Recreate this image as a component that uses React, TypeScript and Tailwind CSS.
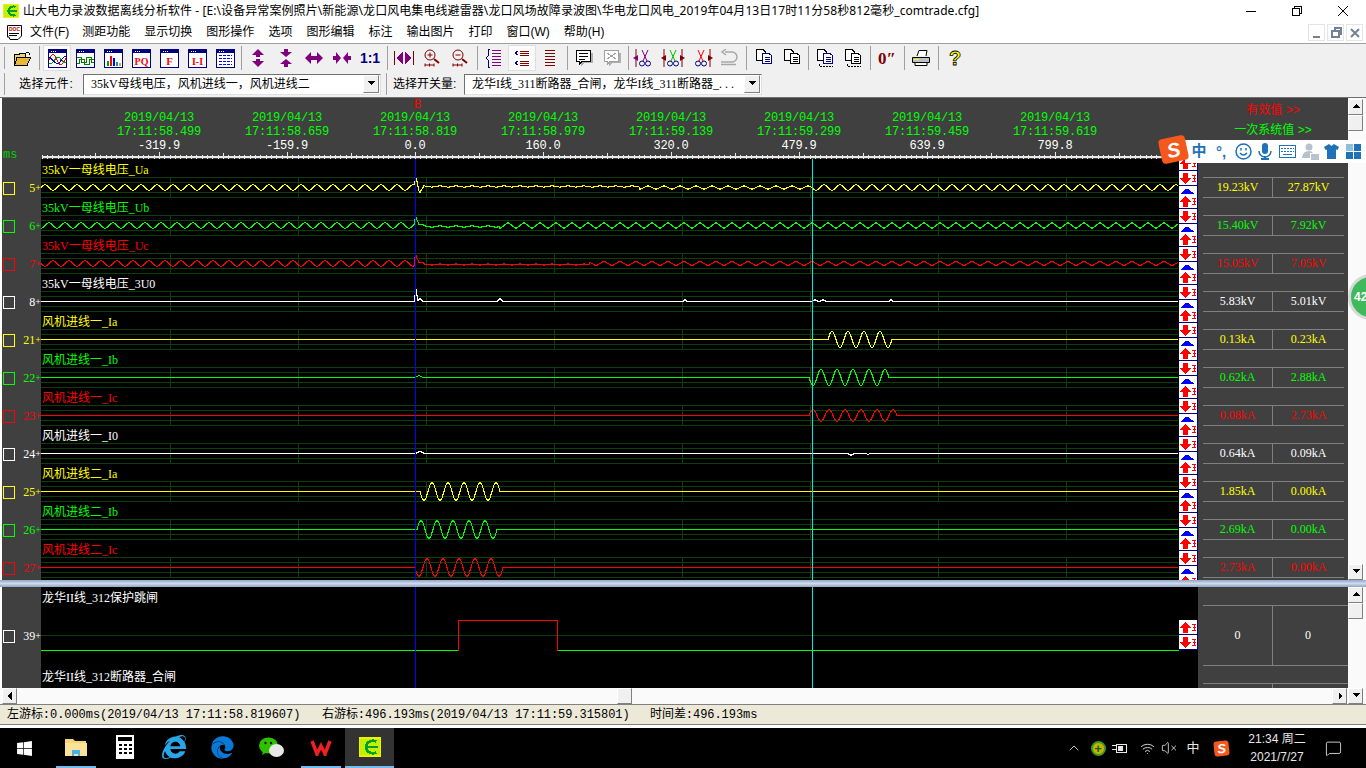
import type { ReactNode } from "react";
import { ChevronUp, Wifi, VolumeX, MessageSquare } from "lucide-react";
import { FaWindows, FaInternetExplorer, FaEdge } from "react-icons/fa";

const UI_FONT = "font-['Liberation_Sans','Noto_Sans_CJK_SC',sans-serif]";
const TITLE_FONT = "font-['Noto_Sans','Noto_Sans_CJK_SC',sans-serif]";
const SERIF_FONT = "font-['Liberation_Serif','Noto_Sans_CJK_SC',serif]";
const MONO_FONT = "font-['Liberation_Mono','Noto_Sans_CJK_SC',monospace]";

const PURPLE = "#800080";
const NAVY = "#000080";
const MAROON = "#800000";
const GRID = "#0c3f0c";

const tones = {
  yellow: { hex: "#ffff00", text: "text-[#ffff00]", border: "border-[#ffff00]" },
  green: { hex: "#00ff00", text: "text-[#00ff00]", border: "border-[#00ff00]" },
  red: { hex: "#ff0000", text: "text-[#ff0000]", border: "border-[#ff0000]" },
  white: { hex: "#ffffff", text: "text-[#ffffff]", border: "border-[#ffffff]" },
};
type Tone = keyof typeof tones;

const sine = (x: number, x0: number) => Math.sin(((x - x0) / 16) * 2 * Math.PI);
const tri = (x: number, x0: number) => (2 / Math.PI) * Math.asin(sine(x, x0));

// burst of sine between two x positions, flat everywhere else
const burst = (x: number, from: number, to: number, amp: number, dir = 1) =>
  x >= from && x <= to ? dir * amp * sine(x, from) : 0;

const blip = (x: number, at: number, h: number, w = 2) =>
  Math.abs(x - at) <= w ? h * (1 - Math.abs(x - at) / (w + 1)) : 0;

type Channel = {
  id: number;
  name: string;
  tone: Tone;
  left: string;
  right: string;
  signal: (x: number) => number;
};

const channels: Channel[] = [
  {
    id: 5,
    name: "35kV一母线电压_Ua",
    tone: "yellow",
    left: "19.23kV",
    right: "27.87kV",
    signal: (x) => {
      if (x < 415) return 3.5 * tri(x, 41);
      if (x < 424) return blip(x, 416, 9) + blip(x, 420, -5);
      if (x < 640) return 1 + 0.7 * tri(x, 420);
      if (x < 812) return 1.8 * tri(x, 420);
      return 3.5 * tri(x, 420);
    },
  },
  {
    id: 6,
    name: "35kV一母线电压_Ub",
    tone: "green",
    left: "15.40kV",
    right: "7.92kV",
    signal: (x) => {
      if (x < 415) return 3.5 * tri(x, 45);
      if (x < 424) return blip(x, 416, 7) + 1;
      if (x < 500) return -1 + 0.8 * tri(x, 420);
      return 3 * tri(x, 424);
    },
  },
  {
    id: 7,
    name: "35kV一母线电压_Uc",
    tone: "red",
    left: "15.05kV",
    right: "7.05kV",
    signal: (x) => {
      if (x < 415) return 3.5 * tri(x, 49);
      if (x < 424) return blip(x, 416, 7) + 1;
      if (x < 590) return -1 + 0.6 * tri(x, 420);
      return 2.5 * tri(x, 424);
    },
  },
  {
    id: 8,
    name: "35kV一母线电压_3U0",
    tone: "white",
    left: "5.83kV",
    right: "5.01kV",
    signal: (x) =>
      blip(x, 416, 12, 1) +
      blip(x, 420, 3) +
      blip(x, 500, 3) +
      blip(x, 685, 2, 1) +
      blip(x, 815, 2) +
      blip(x, 823, 2) +
      blip(x, 891, 2, 1),
  },
  {
    id: 21,
    name: "风机进线一_Ia",
    tone: "yellow",
    left: "0.13kA",
    right: "0.23kA",
    signal: (x) => burst(x, 828, 892, 8),
  },
  {
    id: 22,
    name: "风机进线一_Ib",
    tone: "green",
    left: "0.62kA",
    right: "2.88kA",
    signal: (x) => blip(x, 419, 2, 3) + burst(x, 809, 889, 8, -1),
  },
  {
    id: 23,
    name: "风机进线一_Ic",
    tone: "red",
    left: "0.08kA",
    right: "2.73kA",
    signal: (x) => burst(x, 809, 897, 6),
  },
  {
    id: 24,
    name: "风机进线一_I0",
    tone: "white",
    left: "0.64kA",
    right: "0.09kA",
    signal: (x) => blip(x, 420, 2, 4) + blip(x, 851, -2) + blip(x, 868, -1, 1),
  },
  {
    id: 25,
    name: "风机进线二_Ia",
    tone: "yellow",
    left: "1.85kA",
    right: "0.00kA",
    signal: (x) => burst(x, 420, 500, 9, -1),
  },
  {
    id: 26,
    name: "风机进线二_Ib",
    tone: "green",
    left: "2.69kA",
    right: "0.00kA",
    signal: (x) => burst(x, 417, 497, 9),
  },
  {
    id: 27,
    name: "风机进线二_Ic",
    tone: "red",
    left: "2.73kA",
    right: "0.00kA",
    signal: (x) => burst(x, 415, 503, 9, -1),
  },
];

const ticks = [
  ["17:11:58.499", "-319.9"],
  ["17:11:58.659", "-159.9"],
  ["17:11:58.819", "0.0"],
  ["17:11:58.979", "160.0"],
  ["17:11:59.139", "320.0"],
  ["17:11:59.299", "479.9"],
  ["17:11:59.459", "639.9"],
  ["17:11:59.619", "799.8"],
];

function TitleLogo({ size = 16 }: { size?: number }) {
  return (
    <svg width={size} height={size} viewBox="0 0 16 16" shapeRendering="crispEdges">
      <rect x="0.5" y="1.5" width="15" height="13" fill="#c4f000" stroke="#f0f000" />
      <path d="M12.5 4 A5 4.5 0 1 0 12.5 12" fill="none" stroke="#00a030" strokeWidth="2" />
      <rect x="5" y="7" width="9" height="2" fill="#00a030" />
    </svg>
  );
}

function DocIcon() {
  return (
    <svg width="17" height="17" viewBox="0 0 17 17">
      <path d="M1.5 1.5 H15.5 V12 L12 15.5 H4 L3 13 H1.5 Z" fill="#fff" stroke="#000" />
      <text x="3" y="7" fontSize="5" fontWeight="700" fill="#c00000" className={UI_FONT}>
        DOC
      </text>
      <path d="M3 9.5 H13 M3 11.5 H11" stroke="#000" />
    </svg>
  );
}

function WinFrame({ children }: { children?: ReactNode }) {
  return (
    <svg width="19" height="19" viewBox="0 0 19 19" shapeRendering="crispEdges">
      <rect x="0.5" y="0.5" width="18" height="18" fill="#fff" stroke={NAVY} />
      <rect x="1" y="1" width="17" height="3" fill={NAVY} />
      <path d="M3 2 h1 M5 2 h1 M7 2 h1" stroke="#fff" />
      {children}
    </svg>
  );
}

function WinText({ label, size = 11 }: { label: string; size?: number }) {
  return (
    <WinFrame>
      <text
        x="9.5"
        y="15.5"
        textAnchor="middle"
        fontSize={size}
        fontWeight="700"
        fill="#ff0000"
        className={SERIF_FONT}
      >
        {label}
      </text>
    </WinFrame>
  );
}

function ArrowPair({ dir }: { dir: "v-out" | "v-in" | "h-out" | "h-in" }) {
  const paths = {
    "v-out": "M7 0 L13 6 H9 V8 H5 V6 H1 Z M7 18 L13 12 H9 V10 H5 V12 H1 Z",
    "v-in": "M7 8 L13 3 H9 V0 H5 V3 H1 Z M7 10 L13 15 H9 V18 H5 V15 H1 Z",
    "h-out": "M0 7 L6 1 V5 H12 V1 L18 7 L12 13 V9 H6 V13 Z",
    "h-in": "M8 7 L3 1 V5 H0 V9 H3 V13 Z M10 7 L15 1 V5 H18 V9 H15 V13 Z",
  };
  const tall = dir[0] === "v";
  return (
    <svg width={tall ? 14 : 18} height={tall ? 18 : 14} viewBox={tall ? "0 0 14 18" : "0 0 18 14"}>
      <path d={paths[dir]} fill={PURPLE} />
    </svg>
  );
}

function Magnifier({ plus }: { plus?: boolean }) {
  return (
    <svg width="18" height="20" viewBox="0 0 18 20" fill="none" stroke={MAROON}>
      <circle cx="7" cy="7" r="5" />
      <path d="M4.5 7 H9.5" />
      {plus && <path d="M7 4.5 V9.5" />}
      <path d="M11 11 L16 15" strokeWidth="2" />
      <path d="M2 17 H11 M2 15.5 V18.5 M6.5 15.5 V18.5 M11 15.5 V18.5" />
    </svg>
  );
}

function ListIcon({ kind }: { kind: "left" | "both" | "lines" }) {
  const lines = [2, 5, 8, 11, 14, 17];
  return (
    <svg width="18" height="20" viewBox="0 0 18 20" shapeRendering="crispEdges" fill="none">
      {kind === "left" && (
        <>
          <path d="M5 1 H3 V8 L1 10 L3 12 V19 H5" stroke={NAVY} />
          {lines.map((y) => (
            <path key={y} d={`M7 ${y + 0.5} H16`} stroke={PURPLE} />
          ))}
        </>
      )}
      {kind === "both" && (
        <>
          <path d="M5 3 L2 5 L5 7 M5 13 L2 15 L5 17" stroke={NAVY} />
          {[3, 5, 7, 13, 15, 17].map((y) => (
            <path key={y} d={`M7 ${y + 0.5} H16`} stroke={MAROON} />
          ))}
        </>
      )}
      {kind === "lines" &&
        lines.map((y) => <path key={y} d={`M4 ${y + 0.5} H14`} stroke={MAROON} />)}
    </svg>
  );
}

function NoteIcon({ muted }: { muted?: boolean }) {
  const c = muted ? "#a0a0a0" : "#000";
  return (
    <svg width="20" height="20" viewBox="0 0 20 20" fill="none" shapeRendering="crispEdges">
      <path d="M5 5 H19 V15 H10 L7 18 V15 H5 Z" fill="#b0b0b0" stroke="none" />
      <path d="M2.5 2.5 H16.5 V13.5 H8 L5 16.5 V13.5 H2.5 Z" fill="#fff" stroke={c} />
      {muted ? (
        <path d="M5 5 L14 11 M14 5 L5 11" stroke={c} />
      ) : (
        <path d="M5 5.5 H14 M5 8.5 H14 M5 11.5 H11" stroke={c} />
      )}
    </svg>
  );
}

function Scissors({ kind }: { kind: "left" | "mid" | "right" }) {
  const blade = kind === "mid" ? "#00c000" : kind === "left" ? PURPLE : "#ff0000";
  return (
    <svg width="24" height="20" viewBox="0 0 24 20" fill="none">
      <path d="M9 2 L14 13 M15 2 L10 13" stroke={blade} />
      <circle cx="9" cy="15.5" r="2.5" stroke={NAVY} />
      <circle cx="15" cy="15.5" r="2.5" stroke={NAVY} />
      {kind !== "right" && <path d="M3 1 V19" stroke={MAROON} />}
      {kind !== "left" && <path d="M21 1 V19" stroke={MAROON} />}
      {kind !== "right" && <path d="M0 10 L5 7 V13 Z" fill={kind === "left" ? PURPLE : MAROON} />}
      {kind !== "left" && <path d="M24 10 L19 7 V13 Z" fill={MAROON} />}
    </svg>
  );
}

function UndoIcon() {
  return (
    <svg width="20" height="18" viewBox="0 0 20 18" fill="none" stroke="#a8a8a8" strokeWidth="1.5">
      <path d="M6 3 H13 A5 5 0 0 1 13 13 H2" />
      <path d="M7 0 L3 3 L7 6" />
      <path d="M2 15.5 H17" />
    </svg>
  );
}

function CopyIcon({ tone = "#000080", dashed }: { tone?: string; dashed?: boolean }) {
  return (
    <svg width="18" height="20" viewBox="0 0 18 20" fill="none" shapeRendering="crispEdges">
      <path d="M1.5 1.5 H8 L10 3.5 V12.5 H1.5 Z" fill="#fff" stroke="#000" />
      <path d="M7.5 5.5 H14 L16.5 7.5 V15.5 H7.5 Z" fill="#fff" stroke={tone} />
      <path d="M9.5 9.5 H14.5 M9.5 11.5 H14.5 M9.5 13.5 H14.5" stroke={tone} />
      {dashed && <path d="M3.5 18.5 H16.5 M3.5 15.5 V18.5" stroke="#000" strokeDasharray="2 1" />}
    </svg>
  );
}

function PrinterIcon() {
  return (
    <svg width="20" height="18" viewBox="0 0 20 18" fill="none" stroke="#000">
      <path d="M6 7 L8 1.5 H16 L15 7" fill="#fff" />
      <path d="M1.5 8.5 H18.5 V13.5 H1.5 Z" fill="#c0c0c0" />
      <path d="M4 13.5 H16 V16.5 H4 Z" fill="#fff" />
      <path d="M3 10.5 H8" stroke="#ffff00" />
    </svg>
  );
}

function ToolBtn({ children, pressed }: { children: ReactNode; pressed?: boolean }) {
  return (
    <div
      className={`w-[28px] h-[26px] shrink-0 flex items-center justify-center ${
        pressed ? "bg-[#fbfbfb] border border-[#dedede]" : ""
      }`}
    >
      {children}
    </div>
  );
}

function Sep({ w = "w-[6px]" }: { w?: string }) {
  return (
    <div className={`${w} h-[24px] shrink-0 flex justify-center`}>
      <div className="w-px h-full bg-[#a0a0a0]" />
    </div>
  );
}

function Combo({ text, width }: { text: string; width: string }) {
  return (
    <div
      className={`${width} h-[21px] shrink-0 flex items-center bg-white border border-t-[#707070] border-l-[#707070] border-r-[#e0e0e0] border-b-[#e0e0e0]`}
    >
      <span className={`flex-1 pl-[7px] text-[12px] whitespace-nowrap overflow-hidden text-black ${SERIF_FONT}`}>
        {text}
      </span>
      <div className="w-[16px] h-[18px] mr-px bg-[#f0f0f0] border border-t-white border-l-white border-r-[#808080] border-b-[#808080] flex items-center justify-center">
        <Tri dir="down" />
      </div>
    </div>
  );
}

function Tri({ dir }: { dir: "up" | "down" | "left" | "right" }) {
  const d = {
    up: "M4 1 L8 5 H0 Z",
    down: "M4 5 L8 1 H0 Z",
    left: "M1.5 4 L5.5 0 V8 Z",
    right: "M6.5 4 L2.5 0 V8 Z",
  };
  return (
    <svg width="8" height="8" viewBox="0 0 8 8" shapeRendering="crispEdges">
      <path d={d[dir]} fill="#000" />
    </svg>
  );
}

function ScrollBtn({ dir }: { dir?: "up" | "down" | "left" | "right" }) {
  return (
    <div className="w-[15px] h-[16px] shrink-0 bg-[#f0f0f0] border border-t-white border-l-white border-r-[#808080] border-b-[#808080] flex items-center justify-center">
      {dir && <Tri dir={dir} />}
    </div>
  );
}

function ArrowPairCell({ kind }: { kind: "up" | "down" }) {
  const arrow =
    kind === "up"
      ? "M5.5 2 L11 8 H8 V13 H3 V8 H0 Z"
      : "M5.5 13 L11 7 H8 V2 H3 V7 H0 Z";
  return (
    <svg width="18" height="15" viewBox="0 0 18 15" shapeRendering="crispEdges" className="block">
      <rect width="18" height="15" fill="#fff" />
      <path d={arrow} fill="#ff0000" transform="translate(1 0)" />
      <path d="M13 4.5 H17 M13 10.5 H17 M15 4.5 V10.5 M13.5 7.5 H16.5" stroke="#ff0000" />
      <path d="M0 14.5 H18" stroke={NAVY} />
    </svg>
  );
}

function ArrowStack({ withPeak = true }: { withPeak?: boolean }) {
  return (
    <div className="w-[19px] shrink-0 border-r border-[#000080] bg-white">
      <div className="h-px bg-[#000080] -mb-px" />
      <ArrowPairCell kind="up" />
      <ArrowPairCell kind="down" />
      {withPeak && (
        <svg width="18" height="8" viewBox="0 0 18 8" shapeRendering="crispEdges" className="block">
          <path d="M1 8 L7 3 H9 L12 6 H14 L15 8 Z" fill="#0000ff" />
        </svg>
      )}
    </div>
  );
}

function Ruler() {
  const marks = Array.from({ length: 214 }, (_, i) => i);
  return (
    <svg width="1138" height="7" viewBox="0 0 1138 7" shapeRendering="crispEdges" className="block">
      <rect x="1" y="4" width="1137" height="2" fill="#e8e8e8" />
      {marks.map((i) => {
        const x = Math.round(118 + (i - 22) * (128 / 24));
        const major = (i - 22) % 24 === 0;
        const mid = (i - 22) % 12 === 0;
        const top = major ? 0 : mid ? 1 : 3;
        return <rect key={i} x={x} y={top} width="1" height={7 - top} fill="#e8e8e8" />;
      })}
    </svg>
  );
}

function ChannelPlot({ ch }: { ch: Channel }) {
  const pts: string[] = [];
  for (let x = 41; x <= 1178; x += 1) {
    const y = 10.5 - ch.signal(x);
    pts.push(`${x - 41},${y.toFixed(1)}`);
  }
  const verticals = [170, 298, 426, 554, 682, 810, 938, 1066];
  return (
    <div className="h-[38px] w-[1138px]">
      <div className={`h-[14px] leading-[14px] pl-px text-[12px] whitespace-nowrap ${tones[ch.tone].text} ${SERIF_FONT}`}>
        {ch.name}
      </div>
      <svg width="1138" height="24" viewBox="0 0 1138 24" className="block overflow-visible" fill="none">
        <g stroke={GRID} shapeRendering="crispEdges">
          <path d="M0 0.5 H1137 M0 5.5 H1137 M0 15.5 H1137 M0 20.5 H1137" />
          {verticals.map((x) => (
            <path key={x} d={`M${x - 41 + 0.5} 0 V21`} />
          ))}
        </g>
        <polyline points={pts.join(" ")} stroke={tones[ch.tone].hex} strokeWidth="1.15" shapeRendering="crispEdges" />
      </svg>
    </div>
  );
}

function Gutter({ id, tone }: { id: number; tone: Tone }) {
  return (
    <div className={`h-[38px] flex items-start pt-[19px] pl-px ${SERIF_FONT}`}>
      <div className={`w-[13px] h-[13px] border ${tones[tone].border}`} />
      <span className={`w-[21px] text-right text-[12px] leading-[11px] mt-px ${tones[tone].text}`}>{id}</span>
      <span className={`text-[10px] leading-[10px] mt-[1px] ${tones[tone].text}`}>+</span>
    </div>
  );
}

function ValueCell({ ch }: { ch: Channel }) {
  return (
    <div className={`h-[38px] pt-[14px] ${SERIF_FONT}`}>
      <div className={`h-[21px] w-[141px] flex border-y border-[#808080] text-[12px] ${tones[ch.tone].text}`}>
        <span className="w-[70px] border-r border-[#808080] text-center leading-[19px]">{ch.left}</span>
        <span className="flex-1 text-center leading-[19px]">{ch.right}</span>
      </div>
    </div>
  );
}

function SogouBar() {
  return (
    <div className="absolute left-[1160px] top-[137px] flex items-start">
      <div className="w-[27px] h-[25px] rounded-[4px] bg-[#f4581c] -rotate-12 flex items-center justify-center text-white text-[20px] font-bold italic leading-none shrink-0 z-10 font-['Liberation_Sans',sans-serif]">
        S
      </div>
      <div className="mt-[3px] -ml-[2px] w-[181px] h-[23px] bg-white flex items-center pl-[3px] text-[#1f72b8] text-[15px]">
        <span className="w-[22px] text-center font-bold">中</span>
        <span className="w-[22px] text-center font-bold leading-none">°,</span>
        <div className="w-[22px] flex justify-center">
          <svg width="17" height="17" viewBox="0 0 17 17" fill="none" stroke="#1f72b8" strokeWidth="1.5">
            <circle cx="8.5" cy="8.5" r="7.5" />
            <path d="M5 10 Q8.5 14 12 10" />
            <path d="M6 5 V7.5 M11 5 V7.5" />
          </svg>
        </div>
        <div className="w-[22px] flex justify-center">
          <svg width="14" height="17" viewBox="0 0 14 17" fill="#1f72b8">
            <rect x="4" y="0" width="6" height="11" rx="3" />
            <path d="M1 8 A6 6 0 0 0 13 8" fill="none" stroke="#1f72b8" strokeWidth="1.5" />
            <rect x="6" y="13" width="2" height="3" />
            <rect x="3" y="15" width="8" height="2" />
          </svg>
        </div>
        <div className="w-[23px] flex justify-center">
          <svg width="17" height="13" viewBox="0 0 17 13" shapeRendering="crispEdges">
            <rect x="0.5" y="0.5" width="16" height="12" rx="1" fill="#fff" stroke="#1f72b8" />
            <path d="M2 3.5 H15 M2 6.5 H15" stroke="#1f72b8" strokeDasharray="2 1" />
            <path d="M4 9.5 H13" stroke="#1f72b8" />
          </svg>
        </div>
        <div className="w-[22px] flex justify-center">
          <svg width="17" height="17" viewBox="0 0 17 17" fill="#b8c2cc">
            <circle cx="7" cy="4" r="3.5" />
            <path d="M0 14 Q1 8 7 8 Q10 8 11 10 H8 V15 H0 Z" />
            <rect x="9" y="11" width="8" height="6" />
          </svg>
        </div>
        <div className="w-[21px] flex justify-center">
          <svg width="15" height="15" viewBox="0 0 15 15" fill="#1f72b8">
            <path d="M5 0 L7.5 2 L10 0 L15 3 L13.5 6 L12 5.5 V15 H3 V5.5 L1.5 6 L0 3 Z" />
          </svg>
        </div>
        <div className="w-[22px] flex justify-center">
          <svg width="15" height="15" viewBox="0 0 15 15" fill="#1f72b8" shapeRendering="crispEdges">
            <rect x="0" y="0" width="7" height="7" fill="#8fbfe0" />
            <rect x="8" y="0" width="7" height="7" />
            <rect x="0" y="8" width="7" height="7" />
            <rect x="8" y="8" width="7" height="7" />
          </svg>
        </div>
      </div>
    </div>
  );
}

function TaskItem({ children, open, active }: { children: ReactNode; open?: boolean; active?: boolean }) {
  return (
    <div className={`w-[49px] h-full shrink-0 flex justify-center ${active ? "bg-[#333333]" : ""}`}>
      <div
        className={`h-full flex items-center justify-center ${active ? "w-[49px]" : "w-[40px]"} border-b-2 ${
          open ? "border-[#76b9ed]" : "border-transparent"
        }`}
      >
        {children}
      </div>
    </div>
  );
}

export default function App() {
  return (
    <div className={`relative w-[1366px] h-[768px] overflow-hidden bg-white flex flex-col ${UI_FONT}`}>
      {/* title bar */}
      <div className="h-[22px] shrink-0 flex items-center pl-[3px] text-[12px] text-black">
        <TitleLogo />
        <span className={`ml-[4px] whitespace-nowrap tracking-[0.08px] ${TITLE_FONT}`}>
          山大电力录波数据离线分析软件 - [E:\设备异常案例照片\新能源\龙口风电集电线避雷器\龙口风场故障录波图\华电龙口风电_2019年04月13日17时11分58秒812毫秒_comtrade.cfg]
        </span>
        <div className="ml-auto flex items-center">
          <div className="w-[46px] flex justify-center">
            <div className="w-[10px] h-px bg-black" />
          </div>
          <div className="w-[46px] flex justify-center">
            <svg width="10" height="10" viewBox="0 0 10 10" fill="none" stroke="#000" shapeRendering="crispEdges">
              <path d="M2.5 2.5 V0.5 H9.5 V7.5 H7.5" />
              <rect x="0.5" y="2.5" width="7" height="7" />
            </svg>
          </div>
          <div className="w-[46px] flex justify-center">
            <svg width="10" height="10" viewBox="0 0 10 10" stroke="#000">
              <path d="M0 0 L10 10 M10 0 L0 10" />
            </svg>
          </div>
        </div>
      </div>

      {/* menu */}
      <div className="h-[22px] shrink-0 flex items-center border-b border-[#a0a0a0] pl-[6px] pb-px text-[12px] text-black">
        <DocIcon />
        <div className="ml-[7px] flex gap-[14px] whitespace-nowrap">
          <span className="-mr-px">文件(F)</span>
          {["测距功能", "显示切换", "图形操作", "选项", "图形编辑", "标注", "输出图片", "打印", "窗口(W)", "帮助(H)"].map((m) => (
            <span key={m}>{m}</span>
          ))}
        </div>
        <div className="ml-auto flex gap-[2px] mr-[3px]">
          {["M4 12 H11", "M4 6 H11 V12 H4 Z M7 6 V3 H13 V9 H11", "M4 4 L12 12 M12 4 L4 12"].map((d) => (
            <div key={d} className="w-[17px] h-[17px] border border-[#e4e4e4] flex items-center justify-center">
              <svg width="15" height="15" viewBox="0 0 15 15" fill="none" stroke="#728195" strokeWidth="2">
                <path d={d} />
              </svg>
            </div>
          ))}
        </div>
      </div>

      {/* toolbar */}
      <div className="h-[28px] shrink-0 bg-[#f0f0f0] flex items-center pl-[4px]">
        <div className="w-[4px] h-[22px] border-l border-[#a0a0a0]" />
        <ToolBtn>
          <svg width="17" height="15" viewBox="0 0 17 15" shapeRendering="crispEdges">
            <path d="M0.5 3.5 H5 L6 2 H11 V6 H16.5 L13 14.5 H0.5 Z" fill="#f0d070" stroke="#000" />
            <path d="M3 6.5 H16.5 L13 14.5 H0.5 Z" fill="#e8b838" stroke="#000" />
            <path d="M12 1 L15 2 V4" stroke="#000" fill="none" />
          </svg>
        </ToolBtn>
        <Sep w="w-[7px]" />
        <ToolBtn pressed>
          <WinFrame>
            <g fill="none">
              <path d="M1 11 C4 4 6 4 9 11 S14 17 18 9" stroke="#ff0000" />
              <path d="M1 14 C4 18 7 8 10 8 S15 16 18 13" stroke="#00a000" />
              <path d="M1 8 C5 10 8 17 11 14 S15 7 18 7" stroke="#0000c0" />
            </g>
          </WinFrame>
        </ToolBtn>
        <ToolBtn>
          <WinFrame>
            <path d="M1 8.5 H5.5 V13.5 H10.5 V8.5 H15.5 V13.5 H18 M1 14.5 H3.5 V10.5 H8 V15.5 H13 V10.5 H18" fill="none" stroke="#008000" />
          </WinFrame>
        </ToolBtn>
        <ToolBtn>
          <WinFrame>
            <rect x="3" y="12" width="2" height="5" fill="#00a000" />
            <rect x="6" y="7" width="2" height="10" fill="#ff0000" />
            <rect x="9" y="9" width="2" height="8" fill="#0000ff" />
            <rect x="12" y="13" width="2" height="4" fill="#00a0a0" />
            <rect x="15" y="14" width="2" height="3" fill="#c0c000" />
          </WinFrame>
        </ToolBtn>
        <ToolBtn>
          <WinText label="PQ" size={10} />
        </ToolBtn>
        <ToolBtn>
          <WinText label="F" />
        </ToolBtn>
        <ToolBtn>
          <WinText label="I-I" size={10} />
        </ToolBtn>
        <ToolBtn>
          <WinFrame>
            <path d="M3 6.5 H16 M3 9.5 H16 M3 12.5 H16 M3 15.5 H16" stroke="#0000ff" strokeDasharray="3 1" />
          </WinFrame>
        </ToolBtn>
        <Sep w="w-[5px]" />
        <ToolBtn>
          <ArrowPair dir="v-out" />
        </ToolBtn>
        <ToolBtn>
          <ArrowPair dir="v-in" />
        </ToolBtn>
        <ToolBtn>
          <ArrowPair dir="h-out" />
        </ToolBtn>
        <ToolBtn>
          <ArrowPair dir="h-in" />
        </ToolBtn>
        <ToolBtn>
          <span className="text-[14px] font-bold text-[#000080] leading-none">1:1</span>
        </ToolBtn>
        <Sep />
        <ToolBtn>
          <svg width="20" height="14" viewBox="0 0 20 14" shapeRendering="crispEdges">
            <path d="M0.5 0 V14 M19.5 0 V14" stroke={MAROON} />
            <path d="M2 7 L9 1 V13 Z M18 7 L11 1 V13 Z" fill={PURPLE} />
          </svg>
        </ToolBtn>
        <ToolBtn>
          <Magnifier plus />
        </ToolBtn>
        <ToolBtn>
          <Magnifier />
        </ToolBtn>
        <Sep />
        <ToolBtn>
          <ListIcon kind="left" />
        </ToolBtn>
        <ToolBtn pressed>
          <ListIcon kind="both" />
        </ToolBtn>
        <ToolBtn>
          <ListIcon kind="lines" />
        </ToolBtn>
        <Sep />
        <ToolBtn>
          <NoteIcon />
        </ToolBtn>
        <ToolBtn>
          <NoteIcon muted />
        </ToolBtn>
        <Sep w="w-[5px]" />
        <ToolBtn>
          <Scissors kind="left" />
        </ToolBtn>
        <ToolBtn>
          <Scissors kind="mid" />
        </ToolBtn>
        <ToolBtn>
          <Scissors kind="right" />
        </ToolBtn>
        <ToolBtn>
          <UndoIcon />
        </ToolBtn>
        <Sep w="w-[7px]" />
        <ToolBtn>
          <CopyIcon />
        </ToolBtn>
        <ToolBtn>
          <CopyIcon tone="#000" />
        </ToolBtn>
        <Sep w="w-[5px]" />
        <ToolBtn>
          <CopyIcon dashed />
        </ToolBtn>
        <ToolBtn>
          <CopyIcon tone="#000" dashed />
        </ToolBtn>
        <Sep />
        <ToolBtn>
          <span className={`text-[17px] font-bold leading-none text-[#800000] ${SERIF_FONT}`}>0″</span>
        </ToolBtn>
        <Sep />
        <ToolBtn>
          <PrinterIcon />
        </ToolBtn>
        <Sep />
        <ToolBtn>
          <svg width="14" height="20" viewBox="0 0 14 20">
            <text x="7" y="17" textAnchor="middle" fontSize="20" fontWeight="700" fill="#ffff00" stroke="#000" strokeWidth="0.8" className={UI_FONT}>
              ?
            </text>
          </svg>
        </ToolBtn>
      </div>

      <div className="h-[26px] shrink-0 bg-[#f0f0f0] border-b border-[#707070] flex items-center pl-[4px] pb-px text-[12px] text-black">
        <div className="w-[15px] h-[22px] border-l border-[#a0a0a0]" />
        <span className="w-[64px] whitespace-nowrap tracking-[0.6px]">选择元件:</span>
        <Combo text={"35kV母线电压\uFF0C风机进线一\uFF0C风机进线二"} width="w-[298px]" />
        <div className="w-[7px] h-[22px] ml-[5px] border-l border-[#a0a0a0]" />
        <span className="w-[71px] whitespace-nowrap">选择开关量:</span>
        <Combo text={"龙华I线_311断路器_合闸\uFF0C龙华I线_311断路器_. . ."} width="w-[298px]" />
      </div>

      {/* upper chart pane */}
      <div className="relative h-[482px] shrink-0 flex pl-[2px] bg-white overflow-hidden">
        <div className="w-[1346px] shrink-0 flex flex-col bg-[#404040]">
          <div className="h-[61px] shrink-0 flex flex-col">
            <div className={`h-[54px] flex ${MONO_FONT} text-[12px] leading-[14px]`}>
              <div className="ml-[93px] pt-[13px] w-[1103px] flex">
                {ticks.map(([time, ms]) => (
                  <div key={time} className="w-[128px] shrink-0 text-center tracking-[-0.2px]">
                    <div className="text-[#00ff00]">2019/04/13</div>
                    <div className="text-[#00ff00]">{time}</div>
                    <div className="text-white">{ms}</div>
                  </div>
                ))}
              </div>
              <div className={`w-[150px] pt-[2px] text-center text-[12px] leading-[20px] ${UI_FONT}`}>
                <div className="text-[#ff0000]">有效值 &gt;&gt;</div>
                <div className="text-[#00ff00]">一次系统值 &gt;&gt;</div>
              </div>
            </div>
            <div className="h-[7px] flex">
              <div className={`w-[39px] pl-px text-[#00d000] text-[12px] leading-[6px] ${MONO_FONT}`}>ms</div>
              <Ruler />
            </div>
          </div>
          <div className="flex-1 flex min-h-0">
            <div className="w-[39px] shrink-0 pt-[4px]">
              {channels.map((ch) => (
                <Gutter key={ch.id} id={ch.id} tone={ch.tone} />
              ))}
            </div>
            <div className="w-[1138px] shrink-0 bg-black pt-[4px]">
              {channels.map((ch) => (
                <ChannelPlot key={ch.id} ch={ch} />
              ))}
            </div>
            <div className="w-[19px] shrink-0 -mt-[3px]">
              {Array.from({ length: 12 }, (_, i) => (
                <ArrowStack key={i} />
              ))}
            </div>
            <div className="w-[150px] shrink-0 pl-[5px] pt-[4px]">
              {channels.map((ch) => (
                <ValueCell key={ch.id} ch={ch} />
              ))}
            </div>
          </div>
        </div>
        <div className="flex-1 flex flex-col bg-[#fafafa] pt-px">
          <ScrollBtn dir="up" />
          <ScrollBtn />
          <div className="flex-1" />
          <ScrollBtn dir="down" />
        </div>
        {/* cursors */}
        <div className="absolute left-[415px] top-[61px] bottom-0 w-px bg-[#0000ff]" />
        <div className="absolute left-[812px] top-[61px] bottom-0 w-px bg-[#00e8e8]" />
        <span className={`absolute left-[414px] top-[2px] text-[12px] leading-[10px] text-[#ff0000] ${MONO_FONT}`}>B</span>
      </div>

      {/* splitter */}
      <div className="h-[7px] shrink-0 bg-gradient-to-b from-[#8fa6c6] via-[#d0daea] to-[#8fa6c6]" />

      {/* lower chart pane */}
      <div className="relative h-[101px] shrink-0 flex pl-[2px] bg-white overflow-hidden">
        <div className="w-[39px] shrink-0 bg-[#404040] pt-[24px]">
          <Gutter id={39} tone="white" />
        </div>
        <div className="w-[1138px] shrink-0 bg-black pt-[4px]">
          <div className={`h-[14px] leading-[14px] pl-px text-[12px] text-white whitespace-nowrap ${SERIF_FONT}`}>
            龙华II线_312保护跳闸
          </div>
          <svg width="1138" height="60" viewBox="0 0 1138 60" className="block" fill="none" shapeRendering="crispEdges">
            <path d="M0 30.5 H1138" stroke={GRID} />
            <path d="M0 45.5 H417.5" stroke="#00ff00" />
            <path d="M417.5 45.5 V15.5 H516.5 V45.5" stroke="#ff0000" />
            <path d="M516.5 45.5 H1138" stroke="#00ff00" />
          </svg>
          <div className={`mt-[5px] h-[14px] leading-[14px] pl-px text-[12px] text-white whitespace-nowrap ${SERIF_FONT}`}>
            龙华II线_312断路器_合闸
          </div>
        </div>
        <div className="w-[19px] shrink-0 bg-black pt-[33px]">
          <ArrowStack withPeak={false} />
        </div>
        <div className={`w-[150px] shrink-0 bg-[#404040] pl-[5px] pt-[18px] text-[12px] text-white ${SERIF_FONT}`}>
          <div className="w-[145px] h-[61px] flex border-y border-[#808080]">
            <span className="w-[70px] border-r border-[#808080] text-center leading-[59px]">0</span>
            <span className="w-[70px] text-center leading-[59px]">0</span>
          </div>
          <div className="mt-[17px] w-[145px] h-[5px] border-t border-[#808080] flex">
            <div className="w-[70px] border-r border-[#808080]" />
          </div>
        </div>
        <div className="flex-1 flex flex-col bg-[#fafafa]">
          <ScrollBtn dir="up" />
          <ScrollBtn />
        </div>
        <div className="absolute left-[415px] top-0 bottom-0 w-px bg-[#0000ff]" />
        <div className="absolute left-[812px] top-0 bottom-0 w-px bg-[#00e8e8]" />
      </div>

      {/* horizontal scrollbar */}
      <div className="h-[16px] shrink-0 flex pl-[2px] bg-[#fafafa]">
        <ScrollBtn dir="left" />
        <div className="w-[600px] shrink-0" />
        <ScrollBtn />
        <div className="flex-1" />
        <ScrollBtn dir="right" />
        <div className="w-px" />
        <ScrollBtn dir="down" />
        <div className="w-[3px]" />
      </div>

      {/* status bar */}
      <div className={`h-[21px] shrink-0 flex items-center bg-[#ece9d8] border-y border-[#808080] pl-[7px] text-[12px] tracking-[-0.05px] text-black whitespace-nowrap ${MONO_FONT}`}>
        <span className="w-[315px]">左游标:0.000ms(2019/04/13 17:11:58.819607)</span>
        <span className="w-[328px]">右游标:496.193ms(2019/04/13 17:11:59.315801)</span>
        <span>时间差:496.193ms</span>
      </div>
      <div className="h-[3px] shrink-0 bg-white" />

      {/* taskbar */}
      <div className="h-[40px] shrink-0 bg-black flex items-center text-white">
        <div className="w-[51px] h-full shrink-0 flex items-center justify-center pr-[3px]">
          <FaWindows size={17} color="#fff" />
        </div>
        <TaskItem open>
          <svg width="22" height="19" viewBox="0 0 22 19">
            <path d="M0 1 H8 L10 3 H21 V18 H0 Z" fill="#f6d577" />
            <rect x="0" y="5" width="22" height="13" fill="#fbe39a" />
            <path d="M7 12 H15 V18 H13 V16 H9 V18 H7 Z" fill="#4ab0e8" />
          </svg>
        </TaskItem>
        <TaskItem>
          <svg width="18" height="24" viewBox="0 0 18 24" shapeRendering="crispEdges">
            <rect width="18" height="24" fill="#fff" />
            <rect x="2" y="2" width="14" height="4" fill="#000" />
            {[9, 13, 17].map((y) => (
              <path key={y} d={`M3 ${y} h3 v2 h-3 Z M8 ${y} h3 v2 h-3 Z M13 ${y} h3 v2 h-3 Z`} fill="#000" />
            ))}
          </svg>
        </TaskItem>
        <TaskItem>
          <FaInternetExplorer size={24} color="#2aa6e8" />
        </TaskItem>
        <TaskItem>
          <FaEdge size={23} color="#0a78d7" />
        </TaskItem>
        <TaskItem>
          <svg width="25" height="21" viewBox="0 0 25 21">
            <ellipse cx="9.5" cy="8.5" rx="9.5" ry="8" fill="#2dc100" />
            <path d="M4 14 L3 18 L8 15 Z" fill="#2dc100" />
            <ellipse cx="17.5" cy="13.5" rx="7.5" ry="6.5" fill="#e8e8e8" />
            <circle cx="6.5" cy="6" r="1.2" fill="#111" />
            <circle cx="12" cy="6" r="1.2" fill="#111" />
          </svg>
        </TaskItem>
        <TaskItem open>
          <svg width="22" height="17" viewBox="0 0 22 17" fill="none">
            <path d="M2 2 L7 15 L11 7 L15 15 L20 2" stroke="#f02020" strokeWidth="3.5" />
          </svg>
        </TaskItem>
        <TaskItem active open>
          <div className="w-[22px] h-[22px] flex items-center justify-center">
            <TitleLogo size={24} />
          </div>
        </TaskItem>
        <div className="ml-auto flex items-center h-full text-[12px] text-[#e8e8e8]">
          <div className="w-[24px] flex justify-center">
            <ChevronUp size={16} strokeWidth={1.25} />
          </div>
          <div className="w-[24px] flex justify-center">
            <div className="w-[15px] h-[15px] rounded-full bg-[#c8b400] border-2 border-[#3a9a2a] flex items-center justify-center text-[13px] font-bold leading-none text-[#106010]">
              +
            </div>
          </div>
          <div className="w-[20px] flex justify-center">
            <svg width="16" height="12" viewBox="0 0 16 12" fill="none" stroke="#e8e8e8" shapeRendering="crispEdges">
              <rect x="4.5" y="2.5" width="10" height="8" />
              <rect x="6" y="4" width="5" height="5" fill="#e8e8e8" stroke="none" />
              <path d="M0 3.5 H4 M0 7 H4" />
            </svg>
          </div>
          <div className="w-[34px] flex justify-center">
            <Wifi size={15} strokeWidth={1.4} />
          </div>
          <div className="w-[10px] flex justify-center shrink-0">
            <VolumeX size={16} strokeWidth={1.25} className="shrink-0" />
          </div>
          <div className="w-[38px] text-center text-[13px]">中</div>
          <div className="w-[18px] flex justify-center">
            <div className="w-[15px] h-[15px] rounded-[3px] bg-[#f4581c] text-white text-[13px] font-bold italic leading-[15px] text-center -rotate-6">S</div>
          </div>
          <div className="w-[94px] text-center leading-[18px]">
            <div>21:34 周二</div>
            <div>2021/7/27</div>
          </div>
          <div className="w-[18px] flex justify-center">
            <MessageSquare size={17} strokeWidth={1.2} />
          </div>
          <div className="w-[24px]" />
        </div>
      </div>

      {/* overlays: input method bar and floating badge */}
      <SogouBar />
      <div className="absolute left-[1348px] top-[274px] w-[46px] h-[46px] rounded-full bg-[#3fba5a] border-[3px] border-[#d8d8d8] flex items-center pl-[3px] text-white text-[12px] font-bold">
        42
      </div>
    </div>
  );
}
